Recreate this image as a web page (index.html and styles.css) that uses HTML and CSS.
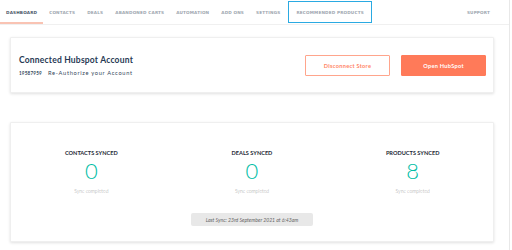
FILE: index.html
```html
<!DOCTYPE html>
<html>
<head>
<meta charset="utf-8">
<link rel="stylesheet" href="styles.css">
</head>
<body>
<div class="page">
  <nav class="nav">
    <a class="tab active">Dashboard</a>
    <a class="tab">Contacts</a>
    <a class="tab">Deals</a>
    <a class="tab">Abandoned Carts</a>
    <a class="tab">Automation</a>
    <a class="tab">Add Ons</a>
    <a class="tab">Settings</a>
    <a class="tab focus">Recommended Products</a>
    <span class="spacer"></span>
    <a class="tab support">Support</a>
  </nav>
  <main class="content">
    <section class="card account">
      <div class="account-info">
        <h2 class="title">Connected Hubspot Account</h2>
        <div class="sub"><span class="id">19587959</span><span class="reauth">Re-Authorize your Account</span></div>
      </div>
      <div class="actions">
        <button class="btn outline">Disconnect Store</button>
        <button class="btn solid">Open HubSpot</button>
      </div>
    </section>
    <section class="card stats">
      <div class="stat-row">
        <div class="stat">
          <div class="label">CONTACTS SYNCED</div>
          <div class="value">0</div>
          <div class="status">Sync completed</div>
        </div>
        <div class="stat">
          <div class="label">DEALS SYNCED</div>
          <div class="value">0</div>
          <div class="status">Sync completed</div>
        </div>
        <div class="stat">
          <div class="label">PRODUCTS SYNCED</div>
          <div class="value">8</div>
          <div class="status">Sync completed</div>
        </div>
      </div>
      <div class="last-sync">Last Sync: 23rd September 2021 at 6:43am</div>
    </section>
  </main>
</div>
</body>
</html>
```
FILE: styles.css
```css
* { box-sizing: border-box; }
html, body { margin: 0; padding: 0; background: #fff; }
body { font-family: "Lato", "Open Sans", sans-serif; color: #33475b; }
.page {
  width: 510px;
  height: 250px;
  border-right: 1px solid #e8e8e8;
}
.nav {
  display: flex;
  align-items: center;
  height: 25px;
  border-bottom: 1px solid #f0f0f0;
}
.tab {
  display: flex;
  align-items: center;
  height: 24px;
  padding: 0 6px;
  font-family: "DejaVu Sans", sans-serif;
  font-size: 4.2px;
  font-weight: bold;
  letter-spacing: 0.15px;
  text-transform: uppercase;
  color: #a0a7b0;
  white-space: nowrap;
}
.tab.active {
  color: #4a5668;
  border-bottom: 2px solid #f9c3b3;
  padding: 2px 6px 0;
}
.tab.focus {
  height: 22px;
  margin-left: 2px;
  padding: 0 7px;
  border: 1.5px solid #2aaae2;
}
.spacer { flex: 1; }
.tab.support { margin-right: 13px; }
.content {
  padding: 12px 15px 0 10px;
}
.card {
  background: #fff;
  border: 1px solid #efefef;
  box-shadow: 0 1px 3px rgba(0,0,0,0.12);
  border-radius: 1px;
}
.account {
  height: 56px;
  display: flex;
  align-items: center;
  justify-content: space-between;
  padding: 0 7px 0 8px;
}
.title {
  margin: 0;
  font-family: "Lato", sans-serif;
  font-size: 8.5px;
  font-weight: bold;
  letter-spacing: 0.2px;
  color: #273a54;
  line-height: 11px;
}
.sub {
  margin-top: 3px;
  font-size: 5.7px;
  color: #33475b;
  display: flex;
  align-items: baseline;
}
.id { width: 29px; font-size: 4.6px; font-weight: bold; letter-spacing: 0.2px; }
.reauth { letter-spacing: 0.7px; }
.actions { display: flex; gap: 11px; padding-top: 1px; }
.btn {
  width: 85px;
  height: 21px;
  font-family: "Lato", sans-serif;
  font-size: 5.6px;
  font-weight: bold;
  letter-spacing: 0.3px;
  border-radius: 1px;
  cursor: pointer;
}
.btn.outline {
  background: #fff;
  border: 1px solid #ffa58c;
  color: #ff8566;
}
.btn.solid {
  background: #ff7a59;
  border: 1px solid #ff7a59;
  color: #fff;
}
.stats {
  margin-top: 29px;
  height: 120px;
  padding-top: 26px;
  display: flex;
  flex-direction: column;
  align-items: center;
}
.stat-row {
  width: 100%;
  display: grid;
  grid-template-columns: 1fr 1fr 1fr;
}
.stat {
  display: flex;
  flex-direction: column;
  align-items: center;
}
.label {
  font-size: 5.6px;
  font-weight: bold;
  color: #1e2a36;
  line-height: 8px;
}
.value {
  margin-top: 4px;
  font-size: 22px;
  font-weight: 300;
  color: #00bda5;
  line-height: 20px;
}
.status {
  margin-top: 7px;
  font-size: 5px;
  color: #9a9a9a;
  font-weight: 300;
  line-height: 7px;
}
.last-sync {
  margin-top: 18px;
  width: 122px;
  height: 13px;
  background: #e8e8e8;
  border-radius: 2px;
  font-size: 5.1px;
  font-style: italic;
  color: #666;
  display: flex;
  align-items: center;
  justify-content: center;
}
```
